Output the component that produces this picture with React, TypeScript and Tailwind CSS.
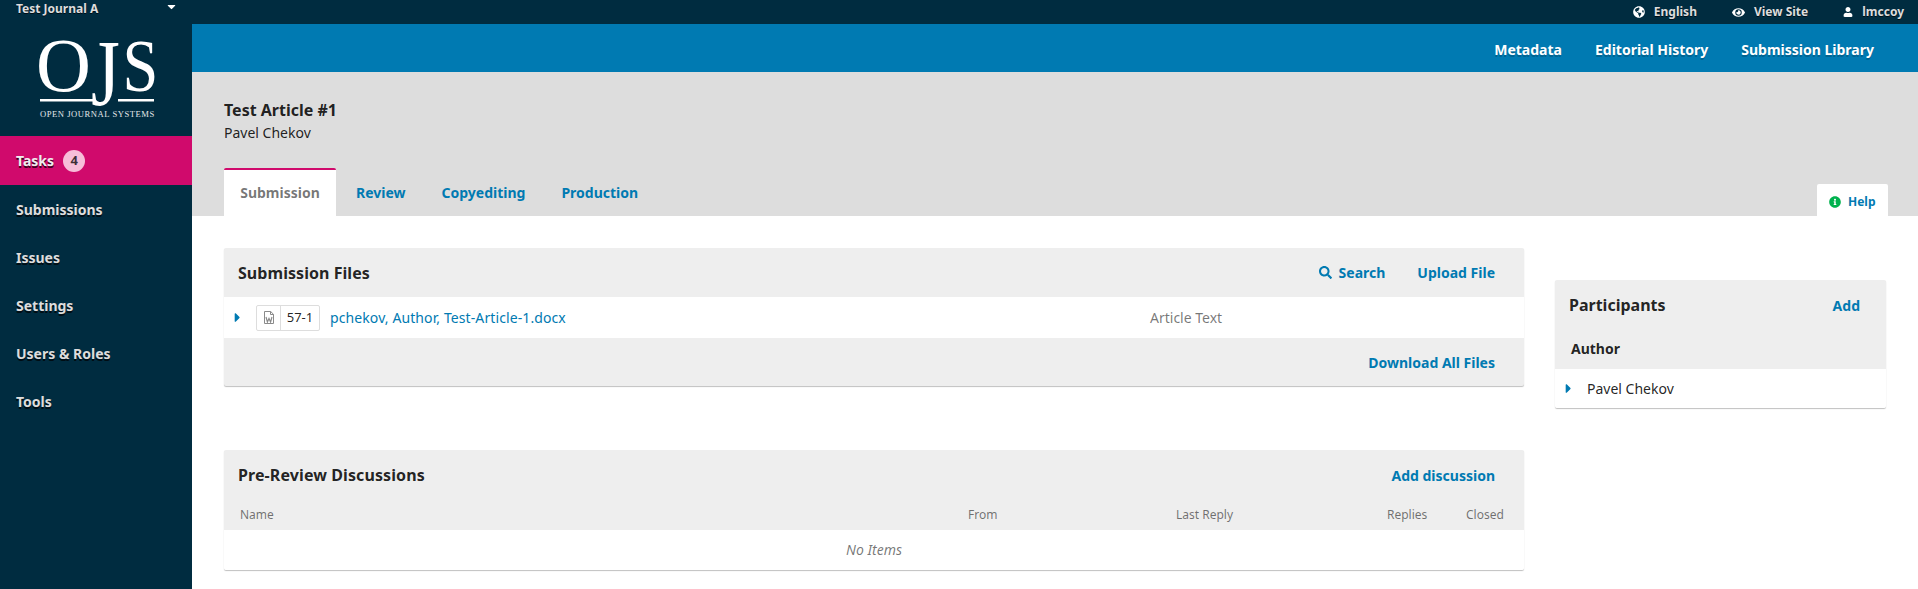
import React from "react";
import { FaCaretDown, FaCaretRight, FaEye, FaGlobeAmericas, FaInfoCircle, FaSearch, FaUser } from "react-icons/fa";

const nav = ["Submissions", "Issues", "Settings", "Users & Roles", "Tools"];

function Logo() {
  return (
    <svg width="192" height="112" viewBox="0 0 192 112" className="block overflow-visible">
      <text x="36" y="67" fontFamily="'Liberation Serif', serif" fontSize="76" fill="#fff">O</text>
      <text transform="translate(91 82) scale(1 1.3)" fontFamily="'Liberation Serif', serif" fontSize="74" fill="#fff">J</text>
      <text transform="translate(122.5 67) scale(0.87 1)" fontFamily="'Liberation Serif', serif" fontSize="74" fill="#fff">S</text>
      <rect x="40" y="75" width="53" height="2.5" fill="#fff" />
      <rect x="118" y="75" width="36" height="2.5" fill="#fff" />
      <text x="40" y="93" fontFamily="'Liberation Serif', serif" fontSize="8.6" letterSpacing="0.53" fill="#e4e8ea">OPEN JOURNAL SYSTEMS</text>
    </svg>
  );
}

function WordFile() {
  return (
    <svg width="12" height="13" viewBox="0 0 12 13" fill="none" stroke="#8a8a8a" strokeWidth="1">
      <path d="M1.5.5h6.2l2.8 2.8v9.2h-9z" />
      <path d="M7.5.5v3h3" />
      <path d="M3 6l1.4 5 1.6-3.6L7.6 11 9 6" strokeWidth="1.2" />
    </svg>
  );
}

function Panel({ className, children }: { className?: string; children: React.ReactNode }) {
  return <section className={`rounded-[2px] bg-[#eee] shadow-[0_1px_1px_rgba(0,0,0,0.25)] ${className ?? ""}`}>{children}</section>;
}

export default function App() {
  return (
    <div className="flex h-[589px] w-[1918px] overflow-hidden bg-white font-['Noto_Sans','Open_Sans',sans-serif] text-[14px] text-[rgba(0,0,0,0.87)]">
      <aside className="w-[192px] shrink-0 bg-[#002c40]">
        <div className="flex h-6 items-start justify-between pt-[1px] pr-[14px] pl-4 text-[12px] leading-[16px] font-bold text-[#ddd] [text-shadow:0_1px_0_rgba(0,0,0,0.7)]">
          <span>Test Journal A</span>
          <FaCaretDown className="mt-[-1px] text-[13px] text-white" />
        </div>
        <Logo />
        <nav className="text-[14px] font-bold text-[#ddd] [text-shadow:0_2px_0_rgba(0,0,0,0.7)]">
          <div className="flex h-[49px] items-center gap-[9px] bg-[#d00a6c] pl-4 text-[#eee]">
            <span className="pb-[1px]">Tasks</span>
            <span className="flex h-[22px] w-[22px] items-center justify-center rounded-full bg-[#f7bed9] text-[13px] font-bold text-[rgba(0,0,0,0.75)] [text-shadow:none]">4</span>
          </div>
          {nav.map((n) => (
            <div key={n} className="flex h-12 items-center pl-4">{n}</div>
          ))}
        </nav>
      </aside>

      <div className="flex min-w-0 flex-1 flex-col">
        <div className="flex h-6 items-center justify-end bg-[#002c40] pr-[14px] text-[12px] font-bold text-[#ddd] [text-shadow:0_1px_0_rgba(0,0,0,0.7)]">
          <span className="flex items-center gap-[9px]"><FaGlobeAmericas className="text-[12px] text-white" />English</span>
          <span className="ml-[35px] flex items-center gap-[9px]"><FaEye className="text-[13px] text-white" />View Site</span>
          <span className="ml-[35px] flex items-center gap-[9px]"><FaUser className="text-[10px] text-white" />lmccoy</span>
        </div>
        <div className="flex h-12 items-center justify-end gap-[33px] bg-[#007ab2] pt-[2px] pr-[44px] text-[14px] font-bold text-white [text-shadow:0_2px_0_rgba(0,0,0,0.2)]">
          <span>Metadata</span>
          <span>Editorial History</span>
          <span>Submission Library</span>
        </div>

        <div className="flex h-[144px] flex-col bg-[#ddd] pr-[30px] pl-8">
          <h1 className="pt-[26px] text-[16px] leading-6 font-bold">Test Article #1</h1>
          <div className="text-[14px] leading-[22px] text-[rgba(0,0,0,0.87)]">Pavel Chekov</div>
          <div className="mt-auto flex items-end justify-between text-[14px] font-bold text-[#007ab2]">
            <div className="flex h-12 items-stretch">
              <div className="flex w-[112px] items-center justify-center rounded-t-[2px] border-t-2 border-[#d00a6c] bg-white pb-[1px] text-[rgba(0,0,0,0.54)]">Submission</div>
              <div className="ml-5 flex items-center pt-[1px]">Review</div>
              <div className="ml-9 flex items-center pt-[1px]">Copyediting</div>
              <div className="ml-9 flex items-center pt-[1px]">Production</div>
            </div>
            <div className="flex h-8 w-[71px] items-center gap-[7px] rounded-t-[2px] bg-white pt-[3px] pl-3 text-[12px]">
              <FaInfoCircle className="text-[12px] text-[#00b24e]" />
              <span>Help</span>
            </div>
          </div>
        </div>

        <div className="flex flex-1 items-start px-8">
          <div className="w-[1300px] shrink-0 pt-8">
            <Panel>
              <div className="flex h-[49px] items-center justify-between pr-[29px] pl-[14px]">
                <h2 className="text-[16px] font-bold tracking-[0.05px]">Submission Files</h2>
                <div className="flex items-center text-[14px] font-bold text-[#007ab2]">
                  <span className="flex items-center gap-[7px]"><FaSearch className="text-[13px]" />Search</span>
                  <span className="ml-8">Upload File</span>
                </div>
              </div>
              <div className="flex h-[41px] items-center bg-white">
                <FaCaretRight className="ml-[6px] text-[15px] text-[#007ab2]" />
                <span className="ml-[11px] flex h-[26px] w-[64px] items-center rounded-[2px] border border-[#ddd] text-[13px]">
                  <span className="flex h-full w-[24px] items-center justify-center border-r border-[#ddd]"><WordFile /></span>
                  <span className="flex-1 text-center">57-1</span>
                </span>
                <span className="ml-[10px] w-[820px] text-[14px] tracking-[0.1px] text-[#007ab2]">pchekov, Author, Test-Article-1.docx</span>
                <span className="text-[14px] text-[rgba(0,0,0,0.54)]">Article Text</span>
              </div>
              <div className="flex h-[48px] items-center justify-end pr-[29px] text-[14px] font-bold text-[#007ab2]">Download All Files</div>
            </Panel>

            <Panel className="mt-[64px]">
              <div className="flex h-[50px] items-center justify-between pr-[29px] pl-[14px]">
                <h2 className="text-[16px] font-bold tracking-[0.1px]">Pre-Review Discussions</h2>
                <span className="text-[14px] font-bold text-[#007ab2]">Add discussion</span>
              </div>
              <div className="grid h-[30px] grid-cols-[728px_208px_211px_79px_auto] items-center pl-4 text-[12px] text-[rgba(0,0,0,0.54)]">
                <span>Name</span>
                <span>From</span>
                <span>Last Reply</span>
                <span>Replies</span>
                <span>Closed</span>
              </div>
              <div className="flex h-10 items-center justify-center rounded-b-[2px] bg-white pb-[2px] text-[14px] text-[rgba(0,0,0,0.54)] italic">No Items</div>
            </Panel>
          </div>

          <div className="ml-[31px] w-[333px] pt-[64px]">
            <Panel>
              <div className="flex h-[50px] items-center justify-between pr-[26px] pl-[14px]">
                <h2 className="text-[16px] font-bold">Participants</h2>
                <span className="text-[14px] font-bold text-[#007ab2]">Add</span>
              </div>
              <div className="flex h-[39px] items-center pb-[3px] pl-4 text-[14px] font-bold">Author</div>
              <div className="flex h-[39px] items-center rounded-b-[2px] bg-white">
                <FaCaretRight className="ml-[6px] text-[15px] text-[#007ab2]" />
                <span className="ml-[11px] text-[14px]">Pavel Chekov</span>
              </div>
            </Panel>
          </div>
        </div>
      </div>
    </div>
  );
}
